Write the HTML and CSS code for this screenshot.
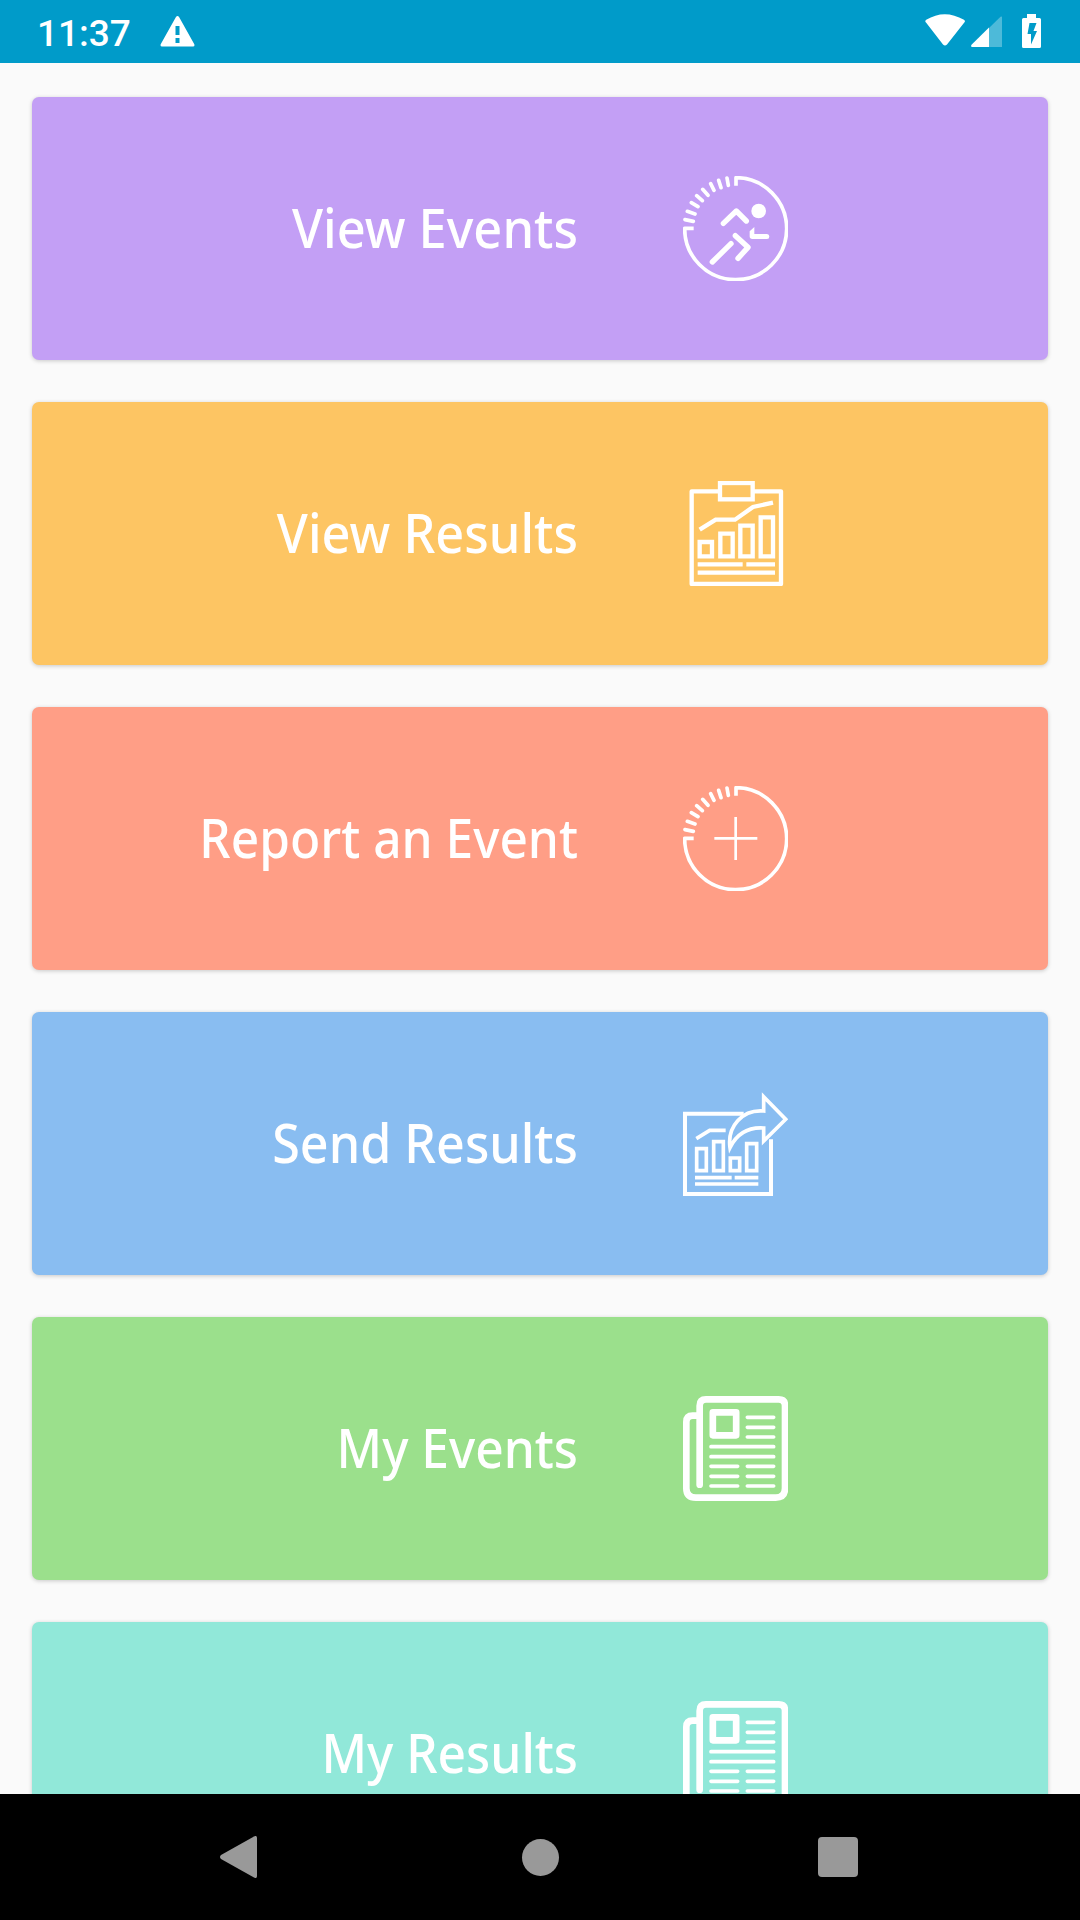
FILE: index.html
```
<!DOCTYPE html>
<html lang="en">
<head>
  <meta charset="UTF-8">
  <meta name="viewport" content="width=device-width, initial-scale=1.0">
  <title>Events</title>
  <link rel="stylesheet" href="styles.css">
</head>
<body>
  <!-- Shared icons -->
  <svg class="defs">
    <symbol id="dial" viewBox="38 33 315 315">
      <path d="M197 62V38A153 153 0 1 1 43 190H70" fill="none" stroke="#fff" stroke-width="11" stroke-linejoin="round"/>
      <path d="M174 61L170 39M152 68L145 46M131 76L121 56M113 91L97 73M96 107L79 92M83 125L63 113M74 147L51 139M69 169L44 164" stroke="#fff" stroke-width="11" stroke-linecap="round"/>
    </symbol>
    <symbol id="news" viewBox="38 33 315 315">
      <g fill="none" stroke="#fff" stroke-linecap="round" stroke-linejoin="round">
        <path d="M88 299V62Q88 43 107 43H325Q344 43 344 62V310Q344 338 316 338H77Q48 338 48 310V111Q48 92 67 92H84" stroke-width="20"/>
        <rect x="127.500" y="82" width="70" height="69" stroke-width="20"/>
        <path d="M231 97H310M231 127H310M231 156H310M122 185H310M122 215H310M122 244H202M231 244H310M122 274H202M231 274H310M122 303H202M231 303H310" stroke-width="11"/>
      </g>
    </symbol>
  </svg>

  <div class="status-bar">
    <span class="time">11:37</span>
    <svg class="warning" viewBox="0 0 35 31"><path d="M15.800 1.200Q17.500-1.200 19.200 1.200L34.300 28.300Q35 30.500 33 30.500H2Q0 30.500 .7 28.300ZM15.500 10v9h4v-9ZM15.500 22v5h4v-5Z" fill="#fff" fill-rule="evenodd"/></svg>
    <svg class="wifi" viewBox="0 0 40 32"><path d="M1 8.500Q-.5 7 1.200 5.800Q19.500-5.500 39 5.800Q40.700 7 39.300 8.500L22 30.500Q20 32.500 18 30.500Z" fill="#fff"/></svg>
    <svg class="signal" viewBox="0 0 31 31"><path d="M31 1Q31 0 29.500 .8L18 12V31H31Z" fill="#4dbad9"/><path d="M18 11.500V31H1Q-.5 30.500 .5 28.800Z" fill="#fff"/></svg>
    <svg class="battery" viewBox="0 0 19 34"><path d="M5 0H14V4H17.500Q19 4 19 5.500V32.500Q19 34 17.500 34H1.500Q0 34 0 32.500V5.500Q0 4 1.500 4H5ZM7.500 9L5.500 20H9V30.500L15 17H11.500L14.500 9Z" fill="#fff" fill-rule="evenodd"/></svg>
  </div>

  <div class="menu">
    <div class="card purple">
      <span class="label view-events">View Events</span>
      <svg class="icon" viewBox="38 33 315 315">
        <use href="#dial" x="38" y="33" width="315" height="315"/>
        <circle cx="265" cy="138" r="22" fill="#fff"/>
        <path d="M159 175L198 138L228 168M195 212L233 247L203 280M182 236L126 291" fill="none" stroke="#fff" stroke-width="16" stroke-linecap="round" stroke-linejoin="round"/>
        <path d="M252 186L238 199V214Q238 222 246 222H290Q297 222 297 214.500Q297 207 290 207H252Z" fill="#fff"/>
      </svg>
    </div>
    <div class="card orange">
      <span class="label view-results">View Results</span>
      <svg class="icon" viewBox="38 33 315 315">
        <g fill="none" stroke="#fff" stroke-width="13">
          <path d="M148 64H64V342H332V64H248" stroke-linejoin="round"/>
          <rect x="149" y="39" width="98" height="49"/>
          <path d="M88 179L136 149H194L248 111L308 98"/>
          <path d="M88 216H125V259H88ZM150 191H187V259H150ZM210 167H247V259H210ZM271 142H308V259H271Z"/>
          <path d="M82 283H217M228 283H314M82 308H314"/>
        </g>
      </svg>
    </div>
    <div class="card salmon">
      <span class="label report-event">Report an Event</span>
      <svg class="icon" viewBox="38 33 315 315">
        <use href="#dial" x="38" y="33" width="315" height="315"/>
        <path d="M196 126V255M132 190H261" stroke="#fff" stroke-width="8"/>
      </svg>
    </div>
    <div class="card blue">
      <span class="label send-results">Send Results</span>
      <svg class="icon" viewBox="38 33 315 315">
        <g fill="none" stroke="#fff" stroke-width="11">
          <path d="M220 101H44V342H302V178" stroke-width="12"/>
          <path d="M280 50L346 118L280 183V144C232 141 198 164 179 203C170 139 216 88 280 93Z"/>
          <path d="M78 176L118 151H166"/>
          <path d="M79 206H108V272H79ZM130 185H159V272H130ZM180 234H208V272H180ZM229 191H259V272H229Z"/>
          <path d="M74 293H184M193 293H264M74 312H264"/>
        </g>
      </svg>
    </div>
    <div class="card green">
      <span class="label my-events">My Events</span>
      <svg class="icon"><use href="#news"/></svg>
    </div>
    <div class="card teal">
      <span class="label my-results">My Results</span>
      <svg class="icon"><use href="#news"/></svg>
    </div>
  </div>

  <div class="nav-bar">
    <svg class="back" viewBox="0 0 37 42"><path d="M34 .4Q37-1 37 2V40Q37 43 34 41.600L1 23Q-1 21 1 19Z" fill="#999"/></svg>
    <div class="home"></div>
    <div class="recent"></div>
  </div>
</body>
</html>
```
FILE: styles.css
```
* {
  box-sizing: border-box;
}

body {
  margin: 0;
  width: 1080px;
  height: 1920px;
  display: flex;
  flex-direction: column;
  overflow: hidden;
  background-color: #fafafa;
  font-family: "Noto Sans", sans-serif;
}

.defs {
  display: none;
}

.status-bar {
  height: 63px;
  flex-shrink: 0;
  display: flex;
  align-items: flex-start;
  padding-left: 37px;
  background-color: #009bc9;
}

.time {
  width: 123px;
  padding-top: 12px;
  font-family: Roboto, sans-serif;
  font-size: 37px;
  font-weight: 500;
  line-height: 44px;
  color: white;
}

.warning {
  width: 35px;
  height: 31px;
  margin-top: 16px;
}

.wifi {
  width: 40px;
  height: 32px;
  margin: 14px 6px 0 730px;
}

.signal {
  width: 31px;
  height: 31px;
  margin-top: 16px;
}

.battery {
  width: 19px;
  height: 34px;
  margin: 14px 0 0 20px;
}

.menu {
  flex: 1;
  min-height: 0;
  display: flex;
  flex-direction: column;
  gap: 42px;
  padding: 34px 32px 0;
  overflow: hidden;
}

.card {
  height: 263px;
  flex-shrink: 0;
  display: flex;
  align-items: center;
  border-radius: 7px;
  box-shadow: 0 1px 4px rgba(0, 0, 0, 0.2);
}

.purple { background-color: #c39ff5; }
.orange { background-color: #fdc563; }
.salmon { background-color: #ff9e86; }
.blue { background-color: #89bdf1; }
.green { background-color: #9be08c; }
.teal { background-color: #91e8d9; }

.label {
  width: 546px;
  margin-right: 105px;
  padding-bottom: 4px;
  text-align: right;
  white-space: nowrap;
  font-size: 54px;
  font-weight: 500;
  line-height: 74px;
  color: white;
  transform-origin: right center;
}

/* slightly condensed lettering */
.view-events { transform: scaleX(0.936); }
.view-results { transform: scaleX(0.935); }
.report-event { transform: scaleX(0.919); }
.send-results { transform: scaleX(0.93); }
.my-events { transform: scaleX(0.92); }
.my-results { transform: scaleX(0.92); }

.icon {
  width: 105px;
  height: 105px;
}

.nav-bar {
  height: 126px;
  flex-shrink: 0;
  display: flex;
  align-items: center;
  padding-left: 220px;
  background-color: black;
}

.back {
  width: 37px;
  height: 42px;
}

.home {
  width: 37px;
  height: 37px;
  margin: 1px 259px 0 265px;
  border-radius: 50%;
  background-color: #999;
}

.recent {
  width: 40px;
  height: 40px;
  border-radius: 4px;
  background-color: #999;
}
```
